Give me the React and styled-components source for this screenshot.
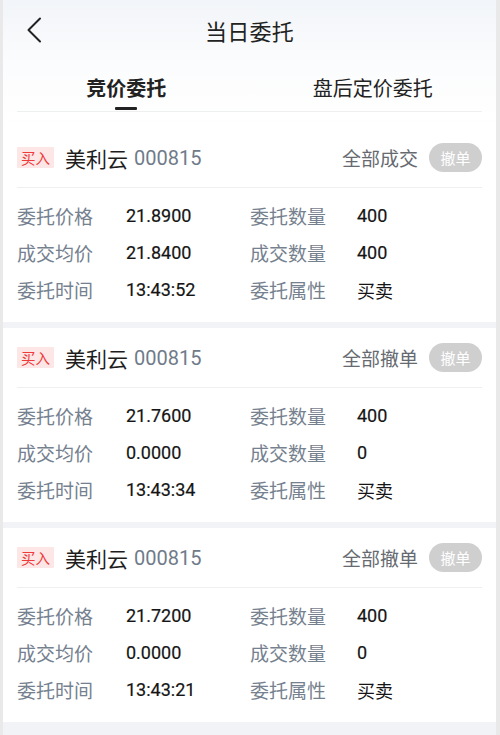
import React from 'react'
import styled, { createGlobalStyle } from 'styled-components'

const GlobalStyle = createGlobalStyle`
  html, body {
    margin: 0;
    padding: 0;
    background: #e9e9ea;
  }
  * {
    box-sizing: border-box;
  }
`

const orders = [
  { status: '全部成交', price: '21.8900', avg: '21.8400', qty: '400', dealQty: '400', time: '13:43:52' },
  { status: '全部撤单', price: '21.7600', avg: '0.0000', qty: '400', dealQty: '0', time: '13:43:34' },
  { status: '全部撤单', price: '21.7200', avg: '0.0000', qty: '400', dealQty: '0', time: '13:43:21' },
]

const BackIcon = () => (
  <svg width="16" height="26" viewBox="0 0 16 26" fill="none">
    <path d="M14 1.5 L2.5 13 L14 24.5" stroke="#222" strokeWidth="2" strokeLinecap="round" strokeLinejoin="round" />
  </svg>
)

const App = () => {
  return (
    <Page>
      <GlobalStyle />
      <Top>
        <Header>
          <BackButton>
            <BackIcon />
          </BackButton>
          <Title>当日委托</Title>
        </Header>
        <Tabs>
          <Tab active>
            竞价委托
            <Indicator />
          </Tab>
          <Tab>盘后定价委托</Tab>
        </Tabs>
      </Top>
      <List>
        {orders.map((o, i) => (
          <Card key={i}>
            <CardHead>
              <Badge>买入</Badge>
              <StockName>美利云</StockName>
              <StockCode>000815</StockCode>
              <Status>{o.status}</Status>
              <CancelButton>撤单</CancelButton>
            </CardHead>
            <Grid>
              <Label>委托价格</Label>
              <Value>{o.price}</Value>
              <Label>委托数量</Label>
              <Value>{o.qty}</Value>
              <Label>成交均价</Label>
              <Value>{o.avg}</Value>
              <Label>成交数量</Label>
              <Value>{o.dealQty}</Value>
              <Label>委托时间</Label>
              <Value>{o.time}</Value>
              <Label>委托属性</Label>
              <Value plain>买卖</Value>
            </Grid>
          </Card>
        ))}
      </List>
    </Page>
  )
}

const Page = styled.div`
  margin: 0 4px 0 3px;
  min-height: 735px;
  background: #f2f3f6;
  font-family: Roboto, "Noto Sans CJK SC", sans-serif;
  overflow: hidden;
`

const Top = styled.div`
  background: linear-gradient(180deg, #f2f5f9 0%, #fbfcfd 50%, #ffffff 100%);
  padding-bottom: 16px;
`

const Header = styled.div`
  position: relative;
  height: 60px;
  display: flex;
  align-items: center;
  justify-content: center;
`

const BackButton = styled.div`
  position: absolute;
  left: 23px;
  top: 17px;
  display: flex;
`

const Title = styled.div`
  font-size: 22px;
  color: #222;
  letter-spacing: 0.2px;
`

const Tabs = styled.div`
  position: relative;
  display: grid;
  grid-template-columns: 1fr 1fr;
  height: 52px;

  &::after {
    content: '';
    position: absolute;
    left: 14px;
    right: 14px;
    bottom: 0;
    height: 1px;
    background: #eeeff1;
  }
`

const Tab = styled.div`
  position: relative;
  display: flex;
  justify-content: center;
  padding-top: 15px;
  font-size: 20px;
  line-height: 28px;
  color: #222;
  font-weight: ${({ active }) => (active ? 700 : 400)};
`

const Indicator = styled.span`
  position: absolute;
  left: 50%;
  bottom: 2px;
  width: 22px;
  height: 3px;
  margin-left: -11px;
  background: #222;
  border-radius: 1px;
`

const List = styled.div`
  display: flex;
  flex-direction: column;
  gap: 6px;
`

const Card = styled.div`
  background: #fff;
  padding: 0 14px 14px;
`

const CardHead = styled.div`
  height: 60px;
  display: flex;
  align-items: center;
  border-bottom: 1px solid #eeeff1;
`

const Badge = styled.span`
  display: inline-flex;
  align-items: center;
  justify-content: center;
  width: 37px;
  height: 21px;
  background: #fde6e6;
  color: #ee3a3a;
  font-size: 14.5px;
  border-radius: 1px;
`

const StockName = styled.span`
  margin-left: 11px;
  font-size: 21px;
  color: #1d1d1d;
`

const StockCode = styled.span`
  margin-left: 6px;
  font-size: 20px;
  color: #6f7b89;
`

const Status = styled.span`
  margin-left: auto;
  font-size: 19px;
  color: #666a70;
`

const CancelButton = styled.span`
  margin-left: 11px;
  width: 53px;
  height: 29px;
  border-radius: 15px;
  background: #cfcfcf;
  color: #fff;
  font-size: 15px;
  display: inline-flex;
  align-items: center;
  justify-content: center;
`

const Grid = styled.div`
  display: grid;
  grid-template-columns: 109px 124px 107px 1fr;
  grid-auto-rows: 37px;
  align-items: center;
  padding-top: 9px;
`

const Label = styled.span`
  font-size: 19px;
  color: #76818f;
`

const Value = styled.span`
  font-size: 18px;
  font-weight: 400;
  color: #151515;
  -webkit-text-stroke: ${({ plain }) => (plain ? '0' : '0.2px #151515')};
`

export default App
